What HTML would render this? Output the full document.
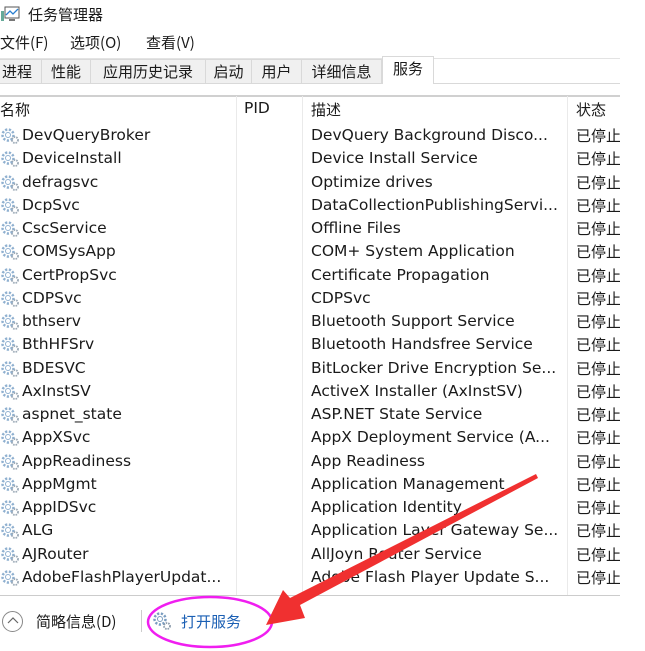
<!DOCTYPE html>
<html><head><meta charset="utf-8"><style>
*{margin:0;padding:0;box-sizing:border-box}
body{width:645px;height:651px;background:#fff;position:relative;overflow:hidden;font-family:"DejaVu Sans","Noto Sans CJK SC",sans-serif;font-size:15.5px;color:#1a1a1a}
.a{position:absolute;white-space:nowrap}
.tab{position:absolute;top:59px;height:25px;background:#f0f0f0;border-right:1px solid #d9d9d9;border-top:1px solid #d9d9d9;font-family:"Noto Sans CJK SC",sans-serif;font-size:15px;line-height:23px;text-align:center}
.row{position:absolute;left:0;width:620px;height:23px;line-height:23px;white-space:nowrap}
.row span{position:absolute;white-space:nowrap}
.vl{position:absolute;top:96px;width:1px;height:500px;background:#eaeaea}
.cj{font-family:"Noto Sans CJK SC",sans-serif}
</style></head><body>
<svg class="a" style="left:1px;top:5px" width="20" height="18" viewBox="0 0 20 18"><rect x="4" y="2" width="14" height="11" fill="#fff" stroke="#555"/><polyline points="5,10 9,6 12,9 17,4" fill="none" stroke="#2a7fd0" stroke-width="1.3"/><rect x="0" y="6" width="3" height="10" fill="#6a9"/><rect x="8" y="14" width="6" height="2" fill="#777"/></svg>
<div class="a cj" style="left:28px;top:4px;font-size:15px">任务管理器</div>
<div class="a cj" style="left:0;top:32px;font-size:15px">文件(F)</div>
<div class="a cj" style="left:70px;top:32px;font-size:15px">选项(O)</div>
<div class="a cj" style="left:146px;top:32px;font-size:15px">查看(V)</div>
<div class="a" style="left:0;top:58px;width:620px;height:1px;background:#e3e3e3"></div>
<div class="tab" style="left:0;width:42px;text-align:left;padding-left:2px">进程</div>
<div class="tab" style="left:42px;width:49px">性能</div>
<div class="tab" style="left:91px;width:115px">应用历史记录</div>
<div class="tab" style="left:206px;width:46px">启动</div>
<div class="tab" style="left:252px;width:50px">用户</div>
<div class="tab" style="left:302px;width:80px">详细信息</div>
<div class="tab" style="left:382px;width:52px;top:56px;height:28px;background:#fff;border-left:1px solid #d9d9d9;border-bottom:none">服务</div>
<div class="a" style="left:434px;top:83px;width:186px;height:1px;background:#d9d9d9"></div>
<div class="a" style="left:0;top:83px;width:382px;height:1px;background:#d9d9d9"></div>
<div class="a" style="left:0;top:95px;width:620px;height:2px;background:#d0d0d0"></div>
<div class="vl" style="left:236px"></div><div class="vl" style="left:302px"></div><div class="vl" style="left:567px"></div>
<div class="a cj" style="left:0;top:99px;font-size:15px">名称</div>
<div class="a" style="left:244px;top:99px">PID</div>
<div class="a cj" style="left:311px;top:99px;font-size:15px">描述</div>
<div class="a cj" style="left:576px;top:99px;font-size:15px">状态</div>
<div id="rows"></div>
<div class="a" style="left:0;top:595px;width:620px;height:1px;background:#ccc"></div>
<div class="a" style="left:2px;top:611px;width:21px;height:21px;border:1px solid #888;border-radius:50%"></div>
<svg class="a" style="left:7px;top:616px" width="12" height="10"><polyline points="1,7 6,2 11,7" fill="none" stroke="#666" stroke-width="1.2"/></svg>
<div class="a cj" style="left:36px;top:611px;font-size:15px">简略信息(D)</div>
<div class="a" style="left:141px;top:610px;width:1px;height:22px;background:#ccc"></div>
<svg class="a" style="left:152px;top:611px" width="20" height="20" viewBox="0 0 20 20"><circle cx="8" cy="8" r="5.5" fill="none" stroke="#7a9dc0" stroke-width="2.5" stroke-dasharray="2.2 1.6"/><circle cx="8" cy="8" r="2.5" fill="#fff" stroke="#7a9dc0"/><circle cx="15" cy="15" r="3" fill="none" stroke="#8a9aaa" stroke-width="1.8" stroke-dasharray="1.5 1"/></svg>
<div class="a cj" style="left:181px;top:611px;color:#1a5fb4;font-size:15px">打开服务</div>
<svg class="a" style="left:0;top:0" width="645" height="651">
<ellipse cx="210" cy="622" rx="62" ry="25" fill="none" stroke="#f01ef0" stroke-width="2.5"/>
<polygon points="536,474 538,478 300,605 305,618 266,625 283,590 290,598" fill="#f03030"/>
</svg>
<script>
var d=[["DevQueryBroker","DevQuery Background Disco..."],["DeviceInstall","Device Install Service"],["defragsvc","Optimize drives"],["DcpSvc","DataCollectionPublishingServi..."],["CscService","Offline Files"],["COMSysApp","COM+ System Application"],["CertPropSvc","Certificate Propagation"],["CDPSvc","CDPSvc"],["bthserv","Bluetooth Support Service"],["BthHFSrv","Bluetooth Handsfree Service"],["BDESVC","BitLocker Drive Encryption Se..."],["AxInstSV","ActiveX Installer (AxInstSV)"],["aspnet_state","ASP.NET State Service"],["AppXSvc","AppX Deployment Service (A..."],["AppReadiness","App Readiness"],["AppMgmt","Application Management"],["AppIDSvc","Application Identity"],["ALG","Application Layer Gateway Se..."],["AJRouter","AllJoyn Router Service"],["AdobeFlashPlayerUpdat...","Adobe Flash Player Update S..."]];
var g='<svg style="position:absolute;left:0;top:3px" width="20" height="18" viewBox="0 0 20 18"><circle cx="8" cy="8" r="5.5" fill="none" stroke="#8fb0d0" stroke-width="2.5" stroke-dasharray="2.2 1.6"/><circle cx="8" cy="8" r="2.5" fill="#fff" stroke="#8fb0d0"/><circle cx="15" cy="13" r="3" fill="none" stroke="#9aa8b5" stroke-width="1.8" stroke-dasharray="1.5 1"/></svg>';
var h='';for(var i=0;i<d.length;i++){h+='<div class="row" style="top:'+(124+i*23.26)+'px">'+g+'<span style="left:22px;width:212px;overflow:hidden">'+d[i][0]+'</span><span style="left:311px;width:254px;overflow:hidden">'+d[i][1]+'</span><span class="cj" style="left:576px;width:44px;overflow:hidden;font-size:15px">已停止</span></div>';}
document.getElementById('rows').innerHTML=h;
</script>
</body></html>
